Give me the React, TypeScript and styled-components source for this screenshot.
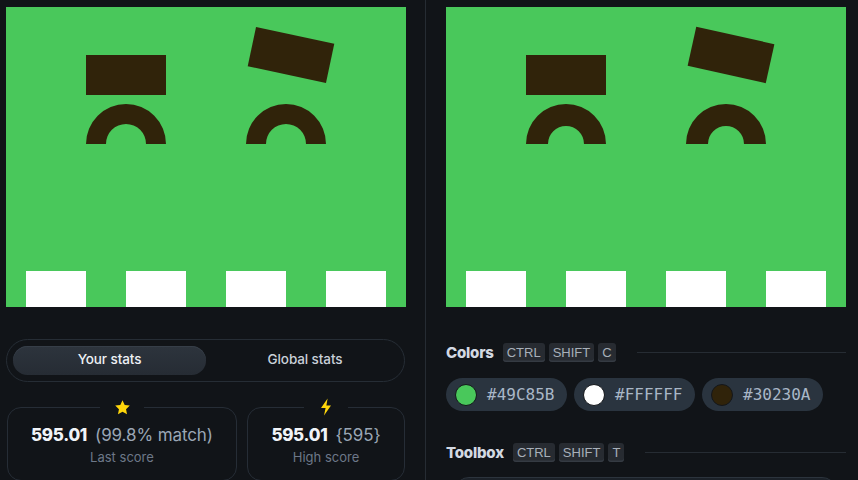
import React from "react";
import styled, { createGlobalStyle } from "styled-components";

const Global = createGlobalStyle`
  html, body { margin: 0; padding: 0; background: #111418; }
  body { font-family: Inter, "Noto Sans", sans-serif; color: #e6ebf1; overflow: hidden; }
  * { box-sizing: border-box; }
`;

const Page = styled.div`
  display: grid;
  grid-template-columns: 425px 1px 1fr;
  width: 858px;
  height: 480px;
  overflow: hidden;
  background: #111418;
`;

const LeftCol = styled.div`
  display: flex;
  flex-direction: column;
  padding: 7px 0 0 6px;
`;

const Divider = styled.div`
  background: #262c33;
  height: 100%;
`;

const RightCol = styled.div`
  display: flex;
  flex-direction: column;
  padding: 7px 12px 0 20px;
`;

const CanvasSvg = styled.svg`
  display: block;
  width: 400px;
  height: 300px;
  flex: none;
`;

const Tabs = styled.div`
  margin-top: 32px;
  width: 399px;
  height: 43px;
  border: 1.5px solid #262d35;
  border-radius: 22px;
  display: grid;
  grid-template-columns: 193px 1fr;
  align-items: center;
  padding: 0 0 0 6px;
`;

const Tab = styled.div<{ $active?: boolean }>`
  height: 29px;
  border-radius: 15px;
  display: flex;
  align-items: center;
  justify-content: center;
  padding-bottom: 3px;
  font-size: 13.5px;
  font-weight: 500;
  letter-spacing: -0.1px;
  color: ${(p) => (p.$active ? "#eef1f5" : "#c9d0d9")};
  background: ${(p) => (p.$active ? "linear-gradient(180deg, #2d343d, #262c34)" : "transparent")};
  box-shadow: ${(p) => (p.$active ? "inset 0 1px 0 #363e48" : "none")};
`;

const Cards = styled.div`
  margin-top: 25px;
  margin-left: 1px;
  display: grid;
  grid-template-columns: 230px 158px;
  gap: 10px;
`;

const Card = styled.div`
  position: relative;
  height: 74px;
  border: 1.5px solid #262d36;
  border-radius: 14px;
  display: flex;
  flex-direction: column;
  align-items: center;
  padding-top: 16px;
`;

const CardIcon = styled.div`
  position: absolute;
  top: -10px;
  left: 50%;
  transform: translateX(-50%);
  width: 44px;
  height: 18px;
  background: #111418;
  display: flex;
  align-items: center;
  justify-content: center;
`;

const ValueRow = styled.div`
  display: flex;
  align-items: baseline;
  gap: 8px;
  line-height: 23px;
`;

const Value = styled.span`
  font-size: 17px;
  font-weight: 800;
  color: #f1f4f8;
  letter-spacing: -0.3px;
`;

const ValueNote = styled.span`
  font-size: 17px;
  font-weight: 400;
  color: #9aa6b5;
  letter-spacing: -0.1px;
`;

const Caption = styled.div`
  margin-top: 2px;
  font-size: 13px;
  color: #6d7888;
`;

const SectionHead = styled.div<{ $top: number }>`
  margin-top: ${(p) => p.$top}px;
  display: flex;
  align-items: center;
  gap: 4px;
  height: 20px;
`;

const SectionTitle = styled.span`
  font-size: 15px;
  font-weight: 800;
  color: #d3d9e2;
  margin-right: 5px;
  letter-spacing: -0.2px;
`;

const Kbd = styled.span`
  height: 19px;
  padding: 0 4px;
  border-radius: 3px;
  background: #272b31;
  box-shadow: inset 0 -1.5px 0 #353b43;
  color: #a8b0ba;
  font-size: 13px;
  font-family: "Liberation Sans", Arial, sans-serif;
  display: flex;
  align-items: center;
`;

const Rule = styled.div`
  flex: 1;
  height: 1px;
  background: #262c33;
  margin-left: 17px;
`;

const Chips = styled.div`
  margin-top: 16px;
  display: flex;
  gap: 7px;
`;

const Chip = styled.div`
  height: 33px;
  width: 121px;
  border-radius: 17px;
  background: #2a343f;
  display: flex;
  align-items: center;
  padding-left: 9px;
  gap: 10px;
`;

const Swatch = styled.span<{ $c: string }>`
  width: 22px;
  height: 22px;
  border-radius: 50%;
  background: ${(p) => p.$c};
  border: 1.5px solid #14171b;
  flex: none;
`;

const Hex = styled.span`
  font-family: "DejaVu Sans Mono", "Liberation Mono", monospace;
  font-size: 16px;
  color: #a9b7c7;
  letter-spacing: 0;
`;

const ToolBox = styled.div`
  margin: 15px 10px 0 9px;
  height: 40px;
  border-radius: 14px;
  background: #1b2128;
  border-top: 1px solid #2c343d;
`;

const Star = () => (
  <svg width="17" height="17" viewBox="0 0 24 24">
    <path
      d="M12 1.8l3.1 6.6 7.2.9-5.3 5 1.4 7.1L12 17.9l-6.4 3.5L7 14.3l-5.3-5 7.2-.9z"
      fill="#ffd60a"
    />
  </svg>
);

const Bolt = () => (
  <svg width="14" height="18" viewBox="0 0 14 18">
    <path d="M8.6 0.5L2 10h4.6L5 17.5 12 7.6H7.4L8.6 0.5z" fill="#ffd60a" />
  </svg>
);

const arc = (cx: number, cy: number, ro: number, ri: number) =>
  `M${cx - ro} ${cy} A${ro} ${ro} 0 0 1 ${cx + ro} ${cy} L${cx + ri} ${cy} A${ri} ${ri} 0 0 0 ${cx - ri} ${cy} Z`;

const Canvas = ({ inner, angle }: { inner: number; angle: number }) => (
  <CanvasSvg viewBox="0 0 400 300" shapeRendering="geometricPrecision">
    <rect width="400" height="300" fill="#49C85B" />
    <rect x="80" y="48" width="80" height="40" fill="#30230A" />
    <rect x="245" y="28" width="80" height="40" fill="#30230A" transform={`rotate(${angle} 285 48)`} />
    <path d={arc(120, 137, 40, inner)} fill="#30230A" />
    <path d={arc(280, 137, 40, inner)} fill="#30230A" />
    {[20, 120, 220, 320].map((x) => (
      <rect key={x} x={x} y="264" width="60" height="36" fill="#FFFFFF" />
    ))}
  </CanvasSvg>
);

export default function App() {
  return (
    <>
      <Global />
      <Page>
        <LeftCol>
          <Canvas inner={20} angle={12} />
          <Tabs>
            <Tab $active>Your stats</Tab>
            <Tab>Global stats</Tab>
          </Tabs>
          <Cards>
            <Card>
              <CardIcon>
                <Star />
              </CardIcon>
              <ValueRow>
                <Value>595.01</Value>
                <ValueNote>(99.8% match)</ValueNote>
              </ValueRow>
              <Caption>Last score</Caption>
            </Card>
            <Card>
              <CardIcon>
                <Bolt />
              </CardIcon>
              <ValueRow>
                <Value>595.01</Value>
                <ValueNote>{"{595}"}</ValueNote>
              </ValueRow>
              <Caption>High score</Caption>
            </Card>
          </Cards>
        </LeftCol>
        <Divider />
        <RightCol>
          <Canvas inner={18} angle={12.5} />
          <SectionHead $top={35}>
            <SectionTitle>Colors</SectionTitle>
            <Kbd>CTRL</Kbd>
            <Kbd>SHIFT</Kbd>
            <Kbd>C</Kbd>
            <Rule />
          </SectionHead>
          <Chips>
            <Chip>
              <Swatch $c="#49C85B" />
              <Hex>#49C85B</Hex>
            </Chip>
            <Chip>
              <Swatch $c="#FFFFFF" />
              <Hex>#FFFFFF</Hex>
            </Chip>
            <Chip>
              <Swatch $c="#30230A" />
              <Hex>#30230A</Hex>
            </Chip>
          </Chips>
          <SectionHead $top={31}>
            <SectionTitle>Toolbox</SectionTitle>
            <Kbd>CTRL</Kbd>
            <Kbd>SHIFT</Kbd>
            <Kbd>T</Kbd>
            <Rule />
          </SectionHead>
          <ToolBox />
        </RightCol>
      </Page>
    </>
  );
}
